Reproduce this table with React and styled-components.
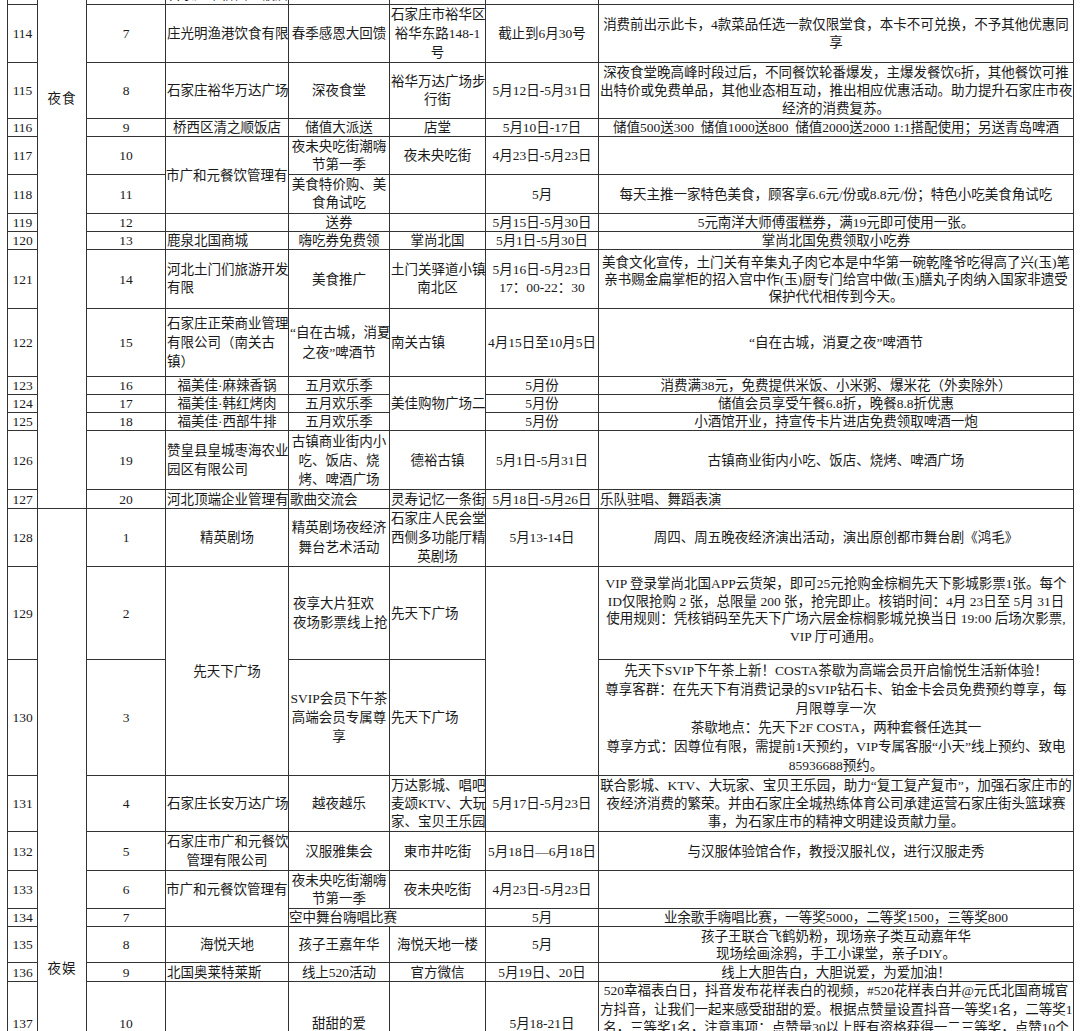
import React from "react";
import styled, { createGlobalStyle } from "styled-components";

const GlobalStyle = createGlobalStyle`
  html, body {
    margin: 0;
    padding: 0;
    background: #fff;
  }
  body {
    font-family: "Liberation Serif", "Noto Sans CJK SC", serif;
    color: #1a1a1a;
  }
`;

const Page = styled.div`
  height: 1031px;
  overflow: hidden;
  padding-left: 7px;
  background: #fff;
`;

// the sheet is a crop: the row above 114 is cut so only its bottom shows
const Sheet = styled.table`
  border-collapse: collapse;
  table-layout: fixed;
  width: 1066px;
  margin-top: -16px;
  font-size: 13.5px;
`;

const Row = styled.tr`
  height: ${(p) => p.$h}px;
`;

const Cell = styled.td`
  border: 1px solid #333;
  padding: ${(p) => (p.$pt ? `${p.$pt}px 1px 0` : "0 1px")};
  padding-left: ${(p) => (p.$pl !== undefined ? `${p.$pl}px` : "1px")};
  text-align: ${(p) => p.$align || "center"};
  vertical-align: ${(p) => p.$valign || "middle"};
  line-height: ${(p) => p.$lh || 17}px;
  white-space: nowrap;
  overflow: visible;
`;

const GroupCell = styled(Cell)`
  vertical-align: top;
  letter-spacing: 1px;
`;

const Overflowing = styled.div`
  height: ${(p) => p.$h}px;
  overflow: hidden;
`;

const cols = [30, 49, 79, 123, 101, 96, 113, 475];

function Lines({ text }) {
  const parts = text.split("\n");
  return parts.map((t, i) => (
    <React.Fragment key={i}>
      {i > 0 && <br />}
      {t}
    </React.Fragment>
  ));
}

function App() {
  return (
    <>
      <GlobalStyle />
      <Page>
        <Sheet>
          <colgroup>
            {cols.map((w, i) => (
              <col key={i} style={{ width: w }} />
            ))}
          </colgroup>
          <tbody>
            <Row $h={20}>
              <Cell></Cell>
              <GroupCell rowSpan={15} $pt={105}>夜食</GroupCell>
              <Cell></Cell>
              <Cell>石家庄市桥西区饭店</Cell>
              <Cell></Cell>
              <Cell></Cell>
              <Cell></Cell>
              <Cell></Cell>
            </Row>
            <Row $h={57}>
              <Cell>114</Cell>
              <Cell>7</Cell>
              <Cell>庄光明渔港饮食有限</Cell>
              <Cell>春季感恩大回馈</Cell>
              <Cell $lh={19}><Lines text={"石家庄市裕华区\n裕华东路148-1\n号"} /></Cell>
              <Cell>截止到6月30号</Cell>
              <Cell $lh={18}>
                <Lines text={"消费前出示此卡，4款菜品任选一款仅限堂食，本卡不可兑换，不予其他优惠同\n享"} />
              </Cell>
            </Row>
            <Row $h={56}>
              <Cell>115</Cell>
              <Cell>8</Cell>
              <Cell>石家庄裕华万达广场</Cell>
              <Cell>深夜食堂</Cell>
              <Cell $lh={18}><Lines text={"裕华万达广场步\n行街"} /></Cell>
              <Cell>5月12日-5月31日</Cell>
              <Cell $lh={18}>
                <Lines text={"深夜食堂晚高峰时段过后，不同餐饮轮番爆发，主爆发餐饮6折，其他餐饮可推\n出特价或免费单品，其他业态相互动，推出相应优惠活动。助力提升石家庄市夜\n经济的消费复苏。"} />
              </Cell>
            </Row>
            <Row $h={18}>
              <Cell>116</Cell>
              <Cell>9</Cell>
              <Cell>桥西区清之顺饭店</Cell>
              <Cell>储值大派送</Cell>
              <Cell>店堂</Cell>
              <Cell>5月10日-17日</Cell>
              <Cell>储值500送300&nbsp;&nbsp;储值1000送800&nbsp;&nbsp;储值2000送2000 1:1搭配使用；另送青岛啤酒</Cell>
            </Row>
            <Row $h={38}>
              <Cell>117</Cell>
              <Cell>10</Cell>
              <Cell rowSpan={2} $align="left" $pl={0}>市广和元餐饮管理有</Cell>
              <Cell $lh={18}><Lines text={"夜未央吃街潮嗨\n节第一季"} /></Cell>
              <Cell>夜未央吃街</Cell>
              <Cell>4月23日-5月23日</Cell>
              <Cell></Cell>
            </Row>
            <Row $h={39}>
              <Cell>118</Cell>
              <Cell>11</Cell>
              <Cell $lh={18}><Lines text={"美食特价购、美\n食角试吃"} /></Cell>
              <Cell></Cell>
              <Cell>5月</Cell>
              <Cell>每天主推一家特色美食，顾客享6.6元/份或8.8元/份；特色小吃美食角试吃</Cell>
            </Row>
            <Row $h={18}>
              <Cell>119</Cell>
              <Cell>12</Cell>
              <Cell></Cell>
              <Cell>送券</Cell>
              <Cell></Cell>
              <Cell>5月15日-5月30日</Cell>
              <Cell>5元南洋大师傅蛋糕券，满19元即可使用一张。</Cell>
            </Row>
            <Row $h={18}>
              <Cell>120</Cell>
              <Cell>13</Cell>
              <Cell $align="left">鹿泉北国商城</Cell>
              <Cell>嗨吃券免费领</Cell>
              <Cell>掌尚北国</Cell>
              <Cell>5月1日-5月30日</Cell>
              <Cell>掌尚北国免费领取小吃券</Cell>
            </Row>
            <Row $h={59}>
              <Cell>121</Cell>
              <Cell>14</Cell>
              <Cell $align="left" $lh={18}><Lines text={"河北土门们旅游开发\n有限"} /></Cell>
              <Cell>美食推广</Cell>
              <Cell $lh={18}><Lines text={"土门关驿道小镇\n南北区"} /></Cell>
              <Cell $lh={18}><Lines text={"5月16日-5月23日\n17：00-22：30"} /></Cell>
              <Cell $lh={17}>
                <Lines text={"美食文化宣传，土门关有辛集丸子肉它本是中华第一碗乾隆爷吃得高了兴(玉)笔\n亲书赐金扁掌柜的招入宫中作(玉)厨专门给宫中做(玉)膳丸子肉纳入国家非遗受\n保护代代相传到今天。"} />
              </Cell>
            </Row>
            <Row $h={68}>
              <Cell>122</Cell>
              <Cell>15</Cell>
              <Cell $align="left" $lh={19}><Lines text={"石家庄正荣商业管理\n有限公司（南关古\n镇）"} /></Cell>
              <Cell $lh={20}><Lines text={"“自在古城，消夏\n之夜”啤酒节"} /></Cell>
              <Cell $align="left">南关古镇</Cell>
              <Cell>4月15日至10月5日</Cell>
              <Cell>“自在古城，消夏之夜”啤酒节</Cell>
            </Row>
            <Row $h={18}>
              <Cell>123</Cell>
              <Cell>16</Cell>
              <Cell>福美佳·麻辣香锅</Cell>
              <Cell>五月欢乐季</Cell>
              <Cell rowSpan={3} $align="left">美佳购物广场二</Cell>
              <Cell>5月份</Cell>
              <Cell>消费满38元，免费提供米饭、小米粥、爆米花（外卖除外）</Cell>
            </Row>
            <Row $h={18}>
              <Cell>124</Cell>
              <Cell>17</Cell>
              <Cell>福美佳·韩红烤肉</Cell>
              <Cell>五月欢乐季</Cell>
              <Cell>5月份</Cell>
              <Cell>储值会员享受午餐6.8折，晚餐8.8折优惠</Cell>
            </Row>
            <Row $h={18}>
              <Cell>125</Cell>
              <Cell>18</Cell>
              <Cell>福美佳·西部牛排</Cell>
              <Cell>五月欢乐季</Cell>
              <Cell>5月份</Cell>
              <Cell>小酒馆开业，持宣传卡片进店免费领取啤酒一炮</Cell>
            </Row>
            <Row $h={59}>
              <Cell>126</Cell>
              <Cell>19</Cell>
              <Cell $align="left" $lh={19}><Lines text={"赞皇县皇城枣海农业\n园区有限公司"} /></Cell>
              <Cell $lh={19}><Lines text={"古镇商业街内小\n吃、饭店、烧\n烤、啤酒广场"} /></Cell>
              <Cell>德裕古镇</Cell>
              <Cell>5月1日-5月31日</Cell>
              <Cell>古镇商业街内小吃、饭店、烧烤、啤酒广场</Cell>
            </Row>
            <Row $h={19}>
              <Cell>127</Cell>
              <Cell>20</Cell>
              <Cell $align="left">河北顶端企业管理有</Cell>
              <Cell $align="left">歌曲交流会</Cell>
              <Cell $align="left">灵寿记忆一条街</Cell>
              <Cell>5月18日-5月26日</Cell>
              <Cell $align="left">乐队驻唱、舞蹈表演</Cell>
            </Row>
            <Row $h={56}>
              <Cell>128</Cell>
              <GroupCell rowSpan={10} $pt={451}>夜娱</GroupCell>
              <Cell>1</Cell>
              <Cell>精英剧场</Cell>
              <Cell $lh={20}><Lines text={"精英剧场夜经济\n舞台艺术活动"} /></Cell>
              <Cell $lh={19}><Lines text={"石家庄人民会堂\n西侧多功能厅精\n英剧场"} /></Cell>
              <Cell>5月13-14日</Cell>
              <Cell>周四、周五晚夜经济演出活动，演出原创都市舞台剧《鸿毛》</Cell>
            </Row>
            <Row $h={93}>
              <Cell>129</Cell>
              <Cell>2</Cell>
              <Cell rowSpan={2}>先天下广场</Cell>
              <Cell $align="left" $pl={4} $lh={19}><Lines text={"夜享大片狂欢\n夜场影票线上抢"} /></Cell>
              <Cell $align="left">先天下广场</Cell>
              <Cell rowSpan={2}></Cell>
              <Cell $lh={17.5} $valign="top" $pt={8}>
                <Lines text={"VIP 登录掌尚北国APP云货架，即可25元抢购金棕榈先天下影城影票1张。每个\nID仅限抢购 2 张，总限量 200 张，抢完即止。核销时间：4月 23日至 5月 31日\n使用规则：凭核销码至先天下广场六层金棕榈影城兑换当日 19:00 后场次影票,\nVIP 厅可通用。"} />
              </Cell>
            </Row>
            <Row $h={116}>
              <Cell>130</Cell>
              <Cell>3</Cell>
              <Cell $lh={19}><Lines text={"SVIP会员下午茶\n高端会员专属尊\n享"} /></Cell>
              <Cell $align="left">先天下广场</Cell>
              <Cell $lh={19}>
                <Lines text={"先天下SVIP下午茶上新！COSTA茶歇为高端会员开启愉悦生活新体验！\n尊享客群：在先天下有消费记录的SVIP钻石卡、铂金卡会员免费预约尊享，每\n月限尊享一次\n茶歇地点：先天下2F COSTA，两种套餐任选其一\n尊享方式：因尊位有限，需提前1天预约，VIP专属客服“小天”线上预约、致电\n85936688预约。"} />
              </Cell>
            </Row>
            <Row $h={56}>
              <Cell>131</Cell>
              <Cell>4</Cell>
              <Cell>石家庄长安万达广场</Cell>
              <Cell>越夜越乐</Cell>
              <Cell $align="left" $lh={18}><Lines text={"万达影城、唱吧\n麦颂KTV、大玩\n家、宝贝王乐园"} /></Cell>
              <Cell>5月17日-5月23日</Cell>
              <Cell $lh={18}>
                <Lines text={"联合影城、KTV、大玩家、宝贝王乐园，助力“复工复产复市”，加强石家庄市的\n夜经济消费的繁荣。并由石家庄全城热练体育公司承建运营石家庄街头篮球赛\n事，为石家庄市的精神文明建设贡献力量。"} />
              </Cell>
            </Row>
            <Row $h={39}>
              <Cell>132</Cell>
              <Cell>5</Cell>
              <Cell $lh={19}><Lines text={"石家庄市广和元餐饮\n管理有限公司"} /></Cell>
              <Cell>汉服雅集会</Cell>
              <Cell>東市井吃街</Cell>
              <Cell>5月18日—6月18日</Cell>
              <Cell>与汉服体验馆合作，教授汉服礼仪，进行汉服走秀</Cell>
            </Row>
            <Row $h={38}>
              <Cell>133</Cell>
              <Cell>6</Cell>
              <Cell rowSpan={2} $align="left" $pl={0} $valign="top" $pt={10}>市广和元餐饮管理有</Cell>
              <Cell $lh={18}><Lines text={"夜未央吃街潮嗨\n节第一季"} /></Cell>
              <Cell>夜未央吃街</Cell>
              <Cell>4月23日-5月23日</Cell>
              <Cell></Cell>
            </Row>
            <Row $h={18}>
              <Cell>134</Cell>
              <Cell>7</Cell>
              <Cell colSpan={2} $align="left" $pl={0}>空中舞台嗨唱比赛</Cell>
              <Cell>5月</Cell>
              <Cell>业余歌手嗨唱比赛，一等奖5000，二等奖1500，三等奖800</Cell>
            </Row>
            <Row $h={36}>
              <Cell>135</Cell>
              <Cell>8</Cell>
              <Cell>海悦天地</Cell>
              <Cell>孩子王嘉年华</Cell>
              <Cell>海悦天地一楼</Cell>
              <Cell>5月</Cell>
              <Cell $lh={17}>
                <Lines text={"孩子王联合飞鹤奶粉，现场亲子类互动嘉年华\n现场绘画涂鸦，手工小课堂，亲子DIY。"} />
              </Cell>
            </Row>
            <Row $h={19}>
              <Cell>136</Cell>
              <Cell>9</Cell>
              <Cell $align="left">北国奥莱特莱斯</Cell>
              <Cell>线上520活动</Cell>
              <Cell>官方微信</Cell>
              <Cell>5月19日、20日</Cell>
              <Cell>线上大胆告白，大胆说爱，为爱加油！</Cell>
            </Row>
            <Row $h={82}>
              <Cell>137</Cell>
              <Cell>10</Cell>
              <Cell></Cell>
              <Cell>甜甜的爱</Cell>
              <Cell></Cell>
              <Cell>5月18-21日</Cell>
              <Cell $lh={18.5}>
                <Overflowing $h={82}>
                  <Lines text={"520幸福表白日，抖音发布花样表白的视频，#520花样表白并@元氏北国商城官\n方抖音，让我们一起来感受甜甜的爱。根据点赞量设置抖音一等奖1名，二等奖1\n名，三等奖1名，注意事项：点赞量30以上既有资格获得一二三等奖，点赞10个\n以上可获得精美礼品一份，活动最终解释权归元氏北国商城所有。"} />
                </Overflowing>
              </Cell>
            </Row>
          </tbody>
        </Sheet>
      </Page>
    </>
  );
}

export default App;
